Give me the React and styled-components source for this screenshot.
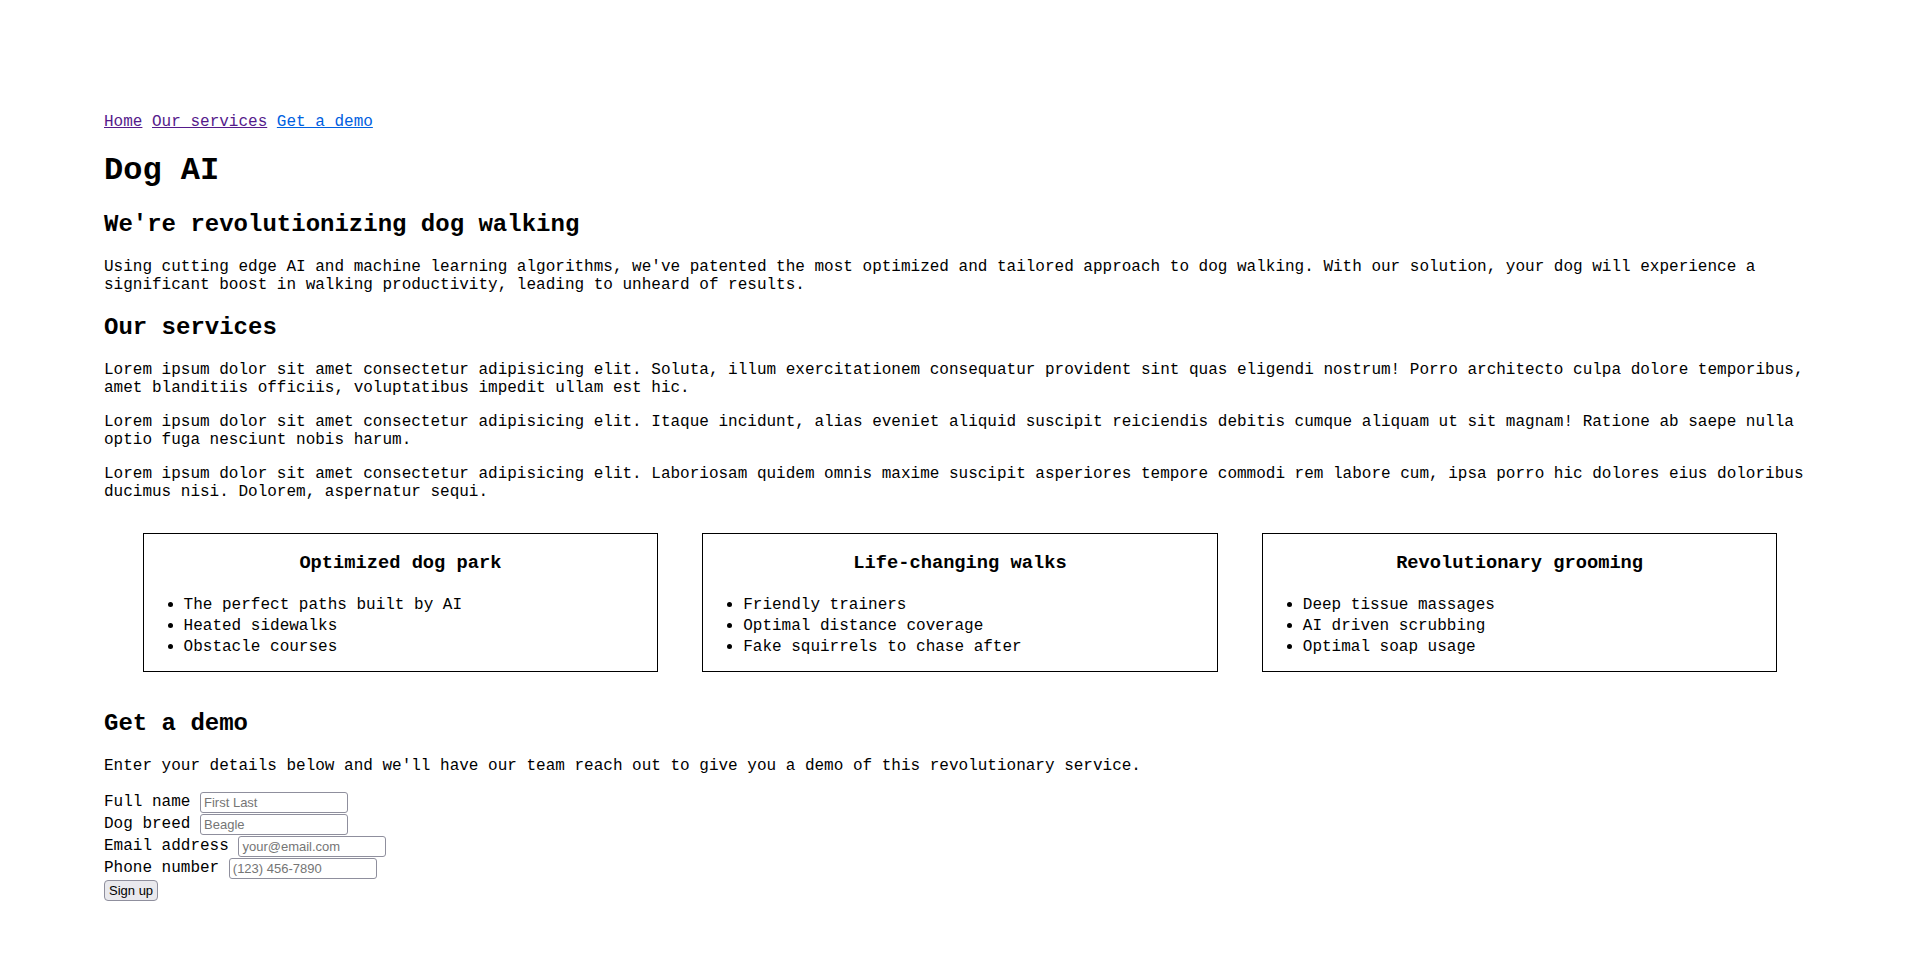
import React from 'react'
import styled, { createGlobalStyle } from 'styled-components';

const services = [
    {
        title: 'Optimized dog park',
        items: ['The perfect paths built by AI', 'Heated sidewalks', 'Obstacle courses'],
    },
    {
        title: 'Life-changing walks',
        items: ['Friendly trainers', 'Optimal distance coverage', 'Fake squirrels to chase after'],
    },
    {
        title: 'Revolutionary grooming',
        items: ['Deep tissue massages', 'AI driven scrubbing', 'Optimal soap usage'],
    },
];

const fields = [
    { label: 'Full name', placeholder: 'First Last' },
    { label: 'Dog breed', placeholder: 'Beagle' },
    { label: 'Email address', placeholder: 'your@email.com' },
    { label: 'Phone number', placeholder: '(123) 456-7890' },
];

function App() {
    return (
        <>
            <GlobalStyle />
            <Page>
                <Nav>
                    <NavLink href="#home" visited>Home</NavLink>{' '}
                    <NavLink href="#services" visited>Our services</NavLink>{' '}
                    <NavLink href="#demo">Get a demo</NavLink>
                </Nav>

                <Title>Dog AI</Title>

                <SectionTitle>We're revolutionizing dog walking</SectionTitle>
                <Text>
                    Using cutting edge AI and machine learning algorithms, we've patented the most optimized and tailored approach to dog walking. With our solution, your dog will experience a significant boost in walking productivity, leading to unheard of results.
                </Text>

                <SectionTitle id="services">Our services</SectionTitle>
                <Text>
                    Lorem ipsum dolor sit amet consectetur adipisicing elit. Soluta, illum exercitationem consequatur provident sint quas eligendi nostrum! Porro architecto culpa dolore temporibus, amet blanditiis officiis, voluptatibus impedit ullam est hic.
                </Text>
                <Text>
                    Lorem ipsum dolor sit amet consectetur adipisicing elit. Itaque incidunt, alias eveniet aliquid suscipit reiciendis debitis cumque aliquam ut sit magnam! Ratione ab saepe nulla optio fuga nesciunt nobis harum.
                </Text>
                <Text>
                    Lorem ipsum dolor sit amet consectetur adipisicing elit. Laboriosam quidem omnis maxime suscipit asperiores tempore commodi rem labore cum, ipsa porro hic dolores eius doloribus ducimus nisi. Dolorem, aspernatur sequi.
                </Text>

                <CardRow>
                    {services.map((service) => (
                        <Card key={service.title}>
                            <CardTitle>{service.title}</CardTitle>
                            <List>
                                {service.items.map((item) => (
                                    <Item key={item}>{item}</Item>
                                ))}
                            </List>
                        </Card>
                    ))}
                </CardRow>

                <SectionTitle id="demo">Get a demo</SectionTitle>
                <Text>
                    Enter your details below and we'll have our team reach out to give you a demo of this revolutionary service.
                </Text>

                <Form onSubmit={(e) => e.preventDefault()}>
                    {fields.map((field) => (
                        <FieldRow key={field.label}>
                            <label>{field.label}</label>
                            <Input type="text" placeholder={field.placeholder} />
                        </FieldRow>
                    ))}
                    <FieldRow>
                        <Button type="submit">Sign up</Button>
                    </FieldRow>
                </Form>
            </Page>
        </>
    )
}

export default App

const GlobalStyle = createGlobalStyle`
    body {
        margin: 0;
        background: #fff;
        color: #000;
        font-family: "Liberation Mono", "Courier New", monospace;
        font-size: 16px;
    }
`

const Page = styled.main`
    padding: 113px 104px 56px;
`

const Nav = styled.nav`
    margin: 0;
`

const NavLink = styled.a`
    color: ${(props) => (props.visited ? '#551a8b' : '#0060df')};
    text-decoration: underline;
`

const Title = styled.h1`
    font-size: 32px;
    margin: 21.44px 0;
`

const SectionTitle = styled.h2`
    font-size: 24px;
    margin: 19.92px 0;
`

const Text = styled.p`
    margin: 16px 0;
`

const CardRow = styled.section`
    display: flex;
    justify-content: center;
    gap: 44px;
    margin: 32px 0 38px;
`

const Card = styled.div`
    width: 30%;
    border: 1px solid #000;
`

const CardTitle = styled.h3`
    font-size: 18.72px;
    text-align: center;
    margin: 18.72px 0;
`

const List = styled.ul`
    margin: 16px 0 14px;
    padding: 2px 0 0 40px;
    list-style: none;
`

const Item = styled.li`
    line-height: 1.3;

    &::before {
        content: "";
        display: inline-block;
        width: 5px;
        height: 5px;
        border-radius: 50%;
        background: #000;
        margin: 0 10.8px 0 -15.8px;
        vertical-align: middle;
    }
`

const Form = styled.form`
    display: flex;
    flex-direction: column;
`

const FieldRow = styled.div`
    display: flex;
    align-items: center;
    gap: 9.6px;
    height: 22px;
`

const Input = styled.input`
    box-sizing: border-box;
    width: 148px;
    height: 21px;
    padding: 1px 3px;
    border: 1px solid #8f8f9d;
    border-radius: 3px;
    font-family: "Liberation Sans", Arial, sans-serif;
    font-size: 13px;
    color: #000;
    background: #fff;

    &::placeholder {
        color: #757575;
    }
`

const Button = styled.button`
    box-sizing: border-box;
    height: 21px;
    padding: 0 4px;
    border: 1px solid #8f8f9d;
    border-radius: 4px;
    background: #e9e9ed;
    color: #000;
    font-family: "Liberation Sans", Arial, sans-serif;
    font-size: 13px;
`
